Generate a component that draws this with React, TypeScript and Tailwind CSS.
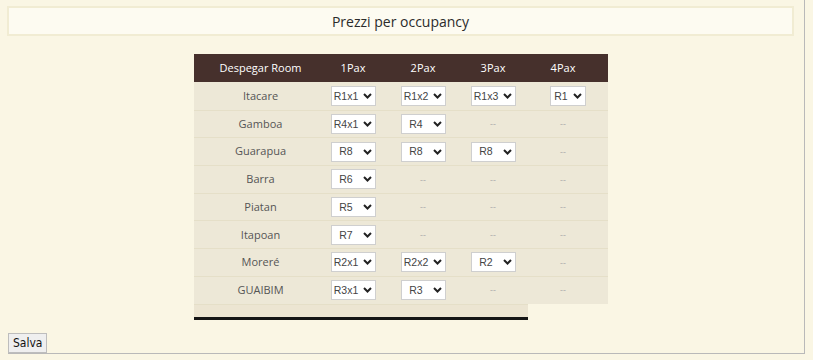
type Cell = string | null;

const rooms: { name: string; cells: Cell[] }[] = [
    {name: "Itacare", cells: ["R1x1", "R1x2", "R1x3", "R1"]},
    {name: "Gamboa", cells: ["R4x1", "R4", null, null]},
    {name: "Guarapua", cells: ["R8", "R8", "R8", null]},
    {name: "Barra", cells: ["R6", null, null, null]},
    {name: "Piatan", cells: ["R5", null, null, null]},
    {name: "Itapoan", cells: ["R7", null, null, null]},
    {name: "Moreré", cells: ["R2x1", "R2x2", "R2", null]},
    {name: "GUAIBIM", cells: ["R3x1", "R3", null, null]},
];

const Select = ({value, narrow}: { value: string; narrow?: boolean }) => (
    <div className={"relative h-[20px] " + (narrow ? "w-[36px]" : "w-[45px]")}>
        <select
            defaultValue={value}
            className="block appearance-none w-full h-full bg-white border border-[#cfcfcf] pl-[2px] pr-[16px] text-center text-[10.5px] leading-none text-[#444] font-['Liberation_Sans',sans-serif] outline-none">
            <option value={value}>{value}</option>
        </select>
        <svg width="9" height="6" viewBox="0 0 9 6"
             className="absolute right-[4px] top-[7px] pointer-events-none">
            <polyline points="1,1 4.5,4.5 8,1" fill="none" stroke="#222" strokeWidth="2"/>
        </svg>
    </div>
);

const Dash = ({last}: { last?: boolean }) => (
    <span className={"text-[9px] text-[#aaa] " + (last ? "pr-[10px]" : "")}>--</span>
);

const App = () => {
    return (
        <div className="min-h-[360px] bg-[#faf6e4] font-['Open_Sans',sans-serif]">
            <div className="ml-2 w-[797px] h-[354px] border-r border-b border-[#b9b9b9] pt-[6px] flex flex-col">
                <div className="-ml-px w-[787px] h-[30px] border-2 border-[#f1ecd3] bg-[#fdfbf1] flex items-center justify-center">
                    <h1 className="text-[14px] text-[#2b2b2b] font-normal select-none">Prezzi per occupancy</h1>
                </div>

                <div className="ml-[186px] mt-[18px] w-[414px]">
                    <div className="grid grid-cols-[124px_70px_70px_70px_80px] h-[28px] bg-[#46302c] text-white text-[11px] items-center text-center">
                        <div className="pl-[9px]">Despegar Room</div>
                        <div>1Pax</div>
                        <div>2Pax</div>
                        <div>3Pax</div>
                        <div className="pr-[10px]">4Pax</div>
                    </div>
                    {rooms.map((room, index) =>
                        <div key={index}
                             className={"grid grid-cols-[124px_70px_70px_70px_80px] h-[27.7px] bg-[#ede8d7] items-center justify-items-center " + (index > 0 ? "border-t border-[#e5dfc8]" : "")}>
                            <div className="pl-[9px] text-[11px] text-[#555]">{room.name}</div>
                            {room.cells.map((cell, i) =>
                                cell
                                    ? <Select key={i} value={cell} narrow={i === 3}/>
                                    : <Dash key={i} last={i === 3}/>
                            )}
                        </div>
                    )}
                    <div className="w-[334px] h-[13px] bg-[#ece5d2] border-t border-[#e5dfc8]"></div>
                    <div className="w-[334px] h-[3px] bg-[#151515]"></div>
                </div>

                <div className="mt-auto">
                    <button
                        className="h-[20px] px-[4px] bg-[#efefef] border border-[#bdbdbd] text-[12px] text-[#111] font-['DejaVu_Sans_Condensed','DejaVu_Sans',sans-serif] [font-stretch:condensed] leading-none">
                        Salva
                    </button>
                </div>
            </div>
        </div>
    );
};

export default App;
